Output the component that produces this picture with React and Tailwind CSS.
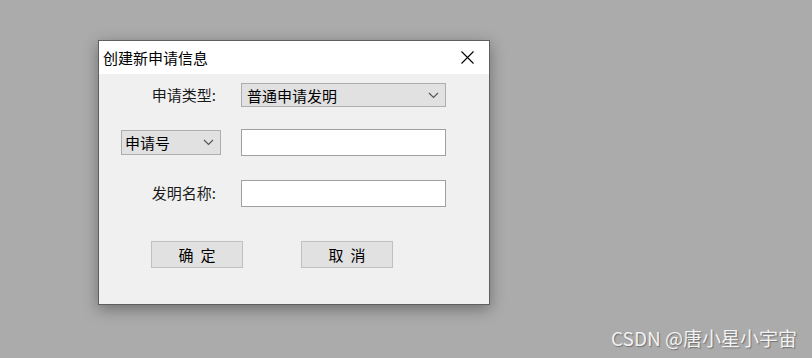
import React from "react";

const font = { fontFamily: '"Microsoft YaHei", "Noto Sans CJK SC", sans-serif' };

const Chevron = () => (
  <svg width="11" height="7" viewBox="0 0 11 7" className="shrink-0">
    <path d="M1 1 L5.5 5.5 L10 1" fill="none" stroke="#555" strokeWidth="1.2" />
  </svg>
);

const App = () => {
  return (
    <div
      className="relative w-[812px] h-[358px] bg-[#ababab] overflow-hidden pt-[40px] pl-[98px]"
      style={font}
    >
      <div className="w-[392px] h-[265px] border border-[#5f5f5f] bg-[#f0f0f0] shadow-[0_4px_14px_rgba(0,0,0,0.35)] flex flex-col">
        {/* title bar */}
        <div className="h-[33px] bg-white flex items-center justify-between pl-[4px] pr-[15px]">
          <span className="text-[15px] text-black leading-none">创建新申请信息</span>
          <svg width="13" height="13" viewBox="0 0 13 13">
            <path d="M0.5 0.5 L12.5 12.5 M12.5 0.5 L0.5 12.5" stroke="#000" strokeWidth="1.1" />
          </svg>
        </div>

        <div className="flex flex-col pl-[22px] pt-[9px]">
          <div className="flex items-center gap-[20px]">
            <div className="w-[100px] text-right pr-[5px] text-[15px] text-[#1a1a1a]">申请类型:</div>
            <div className="w-[205px] h-[24px] bg-[#e1e1e1] border border-[#adadad] flex items-center justify-between pl-[5px] pr-[6px]">
              <span className="text-[15px] text-black leading-none">普通申请发明</span>
              <Chevron />
            </div>
          </div>

          <div className="flex items-center gap-[20px] mt-[22px]">
            <div className="w-[100px] h-[25px] bg-[#e1e1e1] border border-[#adadad] flex items-center justify-between pl-[3px] pr-[6px]">
              <span className="text-[15px] text-black leading-none">申请号</span>
              <Chevron />
            </div>
            <div className="w-[205px] h-[27px] bg-white border border-[#a0a0a0]" />
          </div>

          <div className="flex items-center gap-[20px] mt-[24px]">
            <div className="w-[100px] text-right pr-[5px] text-[15px] text-[#1a1a1a]">发明名称:</div>
            <div className="w-[205px] h-[27px] bg-white border border-[#a0a0a0]" />
          </div>

          <div className="flex gap-[58px] mt-[34px] pl-[30px]">
            <button className="w-[92px] h-[27px] bg-[#e1e1e1] border border-[#c0c0c0] text-[15px] text-black leading-none flex items-center justify-center gap-[7px]">
              <span>确</span>
              <span>定</span>
            </button>
            <button className="w-[92px] h-[27px] bg-[#e1e1e1] border border-[#c0c0c0] text-[15px] text-black leading-none flex items-center justify-center gap-[7px]">
              <span>取</span>
              <span>消</span>
            </button>
          </div>
        </div>
      </div>

      <div className="absolute right-[15px] bottom-[6px] text-[19px] text-[#f2f2f2] [text-shadow:1px_1px_1px_rgba(0,0,0,0.35)]">
        CSDN @唐小星小宇宙
      </div>
    </div>
  );
};

export default App;
